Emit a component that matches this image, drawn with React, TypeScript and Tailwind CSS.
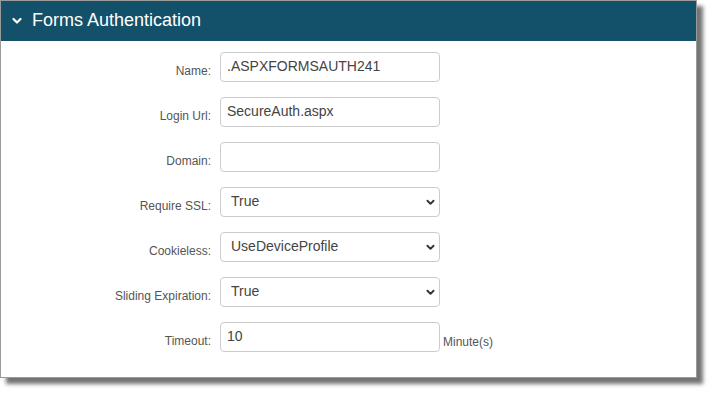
const Chevron = ({ className }: { className: string }) => (
    <svg viewBox="0 0 10 8" className={className} fill="none" stroke="currentColor" strokeWidth="2.2" strokeLinecap="round" strokeLinejoin="round">
        <path d="M1.5 2L5 5.5L8.5 2" />
    </svg>
)

const Row = ({ label, children }: { label: string; children: React.ReactNode }) => (
    <div className="flex items-center h-[30px]">
        <label className="w-[211px] pr-[1px] text-right text-[12px] text-[#555] mt-[7px]">{label}</label>
        <div className="ml-[8px] flex items-center">{children}</div>
    </div>
)

const TextBox = ({ value }: { value: string }) => (
    <input
        defaultValue={value}
        className="w-[220px] h-[30px] border border-[#ccc] rounded-[4px] px-[6px] pb-[3px] text-[14px] text-[#444] bg-white outline-none"
    />
)

const Select = ({ value, options }: { value: string; options: string[] }) => (
    <div className="relative w-[220px] h-[30px]">
        <select
            defaultValue={value}
            className="appearance-none w-full h-full border border-[#ccc] rounded-[4px] pl-[10px] pb-[1px] text-[14px] text-[#444] bg-white outline-none"
        >
            {options.map(o => <option key={o}>{o}</option>)}
        </select>
        <Chevron className="absolute right-[5px] top-[12px] w-[9px] h-[7px] text-[#333] pointer-events-none" />
    </div>
)

export default function App() {
    return (
        <div className="w-[712px] h-[394px] bg-white font-['Liberation_Sans',Arial,sans-serif]">
            <div className="w-[697px] h-[378px] border border-[#9a9a9a] bg-white shadow-[6px_6px_4px_rgba(0,0,0,0.55)]">
                <div className="h-[40px] bg-[#135069] flex items-center pl-[11px] pb-[1px]">
                    <Chevron className="w-[10px] h-[8px] text-white" />
                    <h2 className="ml-[10px] text-[18px] text-white">Forms Authentication</h2>
                </div>
                <div className="pt-[11px] flex flex-col gap-[15px]">
                    <Row label="Name:"><TextBox value=".ASPXFORMSAUTH241" /></Row>
                    <Row label="Login Url:"><TextBox value="SecureAuth.aspx" /></Row>
                    <Row label="Domain:"><TextBox value="" /></Row>
                    <Row label="Require SSL:"><Select value="True" options={["True", "False"]} /></Row>
                    <Row label="Cookieless:"><Select value="UseDeviceProfile" options={["UseCookies", "UseUri", "AutoDetect", "UseDeviceProfile"]} /></Row>
                    <Row label="Sliding Expiration:"><Select value="True" options={["True", "False"]} /></Row>
                    <Row label="Timeout:">
                        <TextBox value="10" />
                        <span className="ml-[3px] mt-[10px] text-[12px] text-[#555]">Minute(s)</span>
                    </Row>
                </div>
            </div>
        </div>
    )
}
